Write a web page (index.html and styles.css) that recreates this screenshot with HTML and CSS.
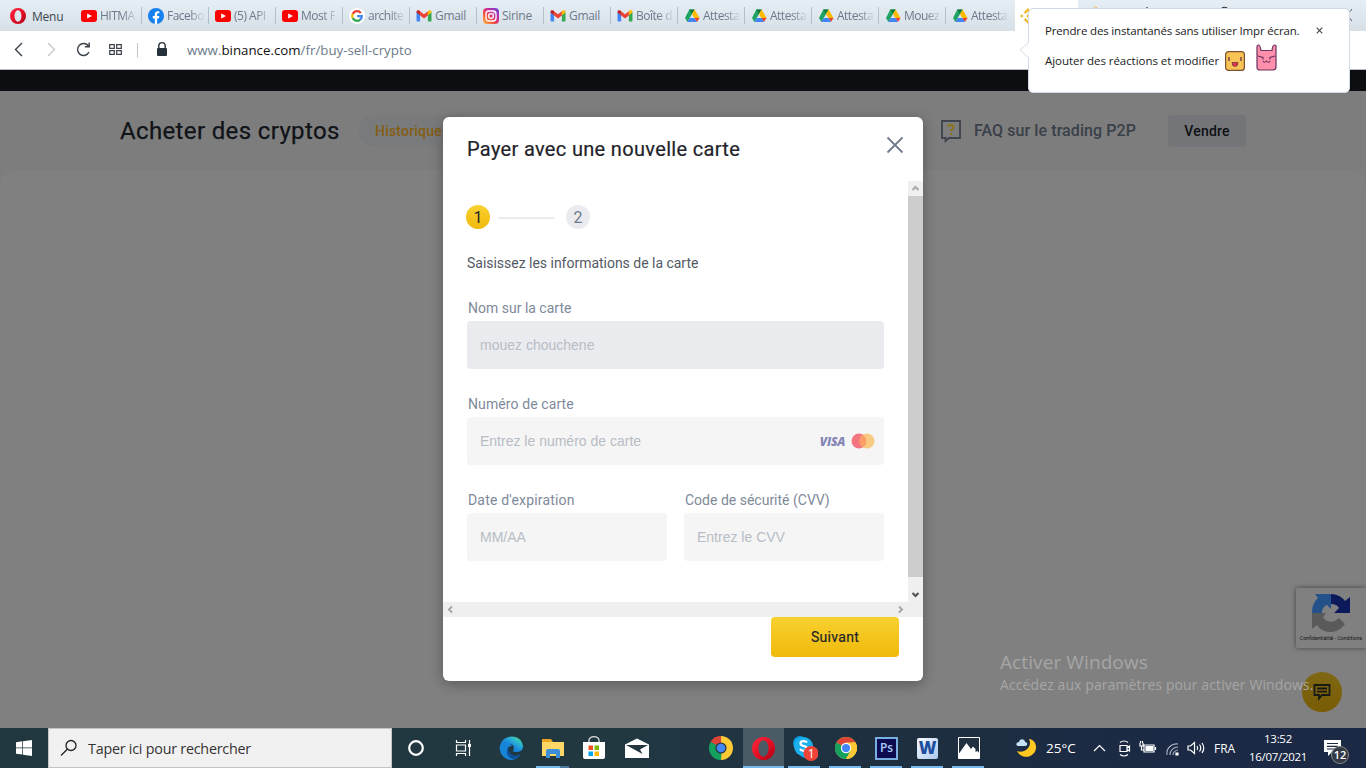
FILE: index.html
```html
<!DOCTYPE html>
<html lang="fr">
<head>
<meta charset="utf-8">
<title>Acheter des cryptos</title>
<link rel="stylesheet" href="styles.css">
</head>
<body>
<svg class="defs" width="0" height="0" aria-hidden="true">
  <symbol id="youtube" viewBox="0 0 16 16"><rect y="2" width="16" height="12" rx="3" fill="#f00"/><path d="M6.2 5.4v5.2L11 8z" fill="#fff"/></symbol>
  <symbol id="gmail" viewBox="0 0 16 16"><path d="M.5 4v8.3c0 .8.5 1.2 1.2 1.2h2.4V6.7z" fill="#4285f4"/><path d="M15.5 4v8.3c0 .8-.5 1.2-1.2 1.2h-2.4V6.7z" fill="#34a853"/><path d="M.5 4.6V4c0-1.7 1.5-2.3 2.8-1.4L4.1 3.200v4.100z" fill="#c5221f"/><path d="M4.100 3.200 8 6.200l3.900-3v4.200L8 10.400 4.100 7.400z" fill="#ea4335"/><path d="M15.500 4.600V4c0-1.700-1.500-2.300-2.800-1.400l-.8.6v4.100z" fill="#fbbc04"/></symbol>
  <symbol id="drive" viewBox="0 0 16 16"><path d="M5.300 1.500h5.300L8 6 3.400 14 1 10z" fill="#1ea362"/><path d="M5.300 1.500 8 6l2.600-4.500z" fill="#11783c"/><path d="M10.600 1.500 15.500 10h-5.200L8 6z" fill="#ffba00"/><path d="M10.300 10h5.200L13 14z" fill="#ea4335"/><path d="M5.700 10h4.600L13 14H3.400z" fill="#4285f4"/></symbol>
  <symbol id="chrome" viewBox="0 0 24 24"><circle cx="12" cy="12" r="12" fill="#fbc934"/><path d="M12 12 1.600 6A12 12 0 0 1 22.400 6H12z" fill="#db4437"/><path d="M1.600 6A12 12 0 0 0 12 24l5-9-5-3z" fill="#16a05d"/><path d="M22.400 6A12 12 0 0 1 12 24l5.200-9L17 6z" fill="#fbc934"/><circle cx="12" cy="12" r="5.600" fill="#fff"/><circle cx="12" cy="12" r="4.500" fill="#4285f4"/></symbol>
  <symbol id="chromeDark" viewBox="0 0 24 24"><path d="M12 12 1.600 6A12 12 0 0 1 12 0z" fill="#db4437"/><path d="M12 0a12 12 0 0 1 0 24V12z" fill="#fbc934"/><path d="M1.600 6A12 12 0 0 0 12 24l1-12z" fill="#16a05d"/><path d="M1.600 6A12 12 0 0 1 12 0v8z" fill="#db4437"/><circle cx="12" cy="12" r="5.600" fill="#2b3a40"/><circle cx="12" cy="12" r="4.300" fill="#4285f4"/></symbol>
  <symbol id="opera" viewBox="0 0 24 24"><path fill-rule="evenodd" d="M12 0a12 12 0 1 0 0 24 12 12 0 0 0 0-24zm0 3.500c3 0 5.200 3.800 5.200 8.500s-2.200 8.500-5.200 8.500S6.800 16.700 6.800 12 9 3.500 12 3.500z" fill="url(#operaRed)"/></symbol>
  <linearGradient id="operaRed" x1="0" y1="0" x2="1" y2="1"><stop offset="0" stop-color="#ff2a40"/><stop offset=".55" stop-color="#e20d22"/><stop offset="1" stop-color="#a70014"/></linearGradient>
  <linearGradient id="insta" x1="0" y1="1" x2="1" y2="0"><stop offset="0" stop-color="#fdc247"/><stop offset=".35" stop-color="#f5533d"/><stop offset=".65" stop-color="#c32aa3"/><stop offset="1" stop-color="#5b4fd8"/></linearGradient>
  <linearGradient id="edgeBlue" x1="0" y1="1" x2="1" y2="0"><stop offset="0" stop-color="#0b5cad"/><stop offset=".5" stop-color="#1b8ee0"/><stop offset=".75" stop-color="#31bfc9"/><stop offset="1" stop-color="#66db50"/></linearGradient>
</svg>

<header class="tabbar">
  <div class="menu"><svg width="16" height="16"><use href="#opera"/></svg><span>Menu</span></div>
  <nav class="tabs">
    <div class="tab"><svg><use href="#youtube"/></svg><span>HITMA</span></div>
    <div class="tab"><svg viewBox="0 0 16 16"><circle cx="8" cy="8" r="8" fill="#1580ee"/><path d="M6.800 16v-5.500h-2V8.100h2V6.400c0-2.100 1.200-3.200 3-3.200.8 0 1.500.1 1.500.1v1.900h-1c-1 0-1.200.6-1.200 1.300v1.600h2.200l-.4 2.400H9.100V16z" fill="#fff"/></svg><span>Facebo</span></div>
    <div class="tab"><svg><use href="#youtube"/></svg><span>(5) API</span></div>
    <div class="tab"><svg><use href="#youtube"/></svg><span>Most F</span></div>
    <div class="tab"><svg viewBox="0 0 16 16"><circle cx="8" cy="8" r="8" fill="#fff"/><g fill="none" stroke-width="2.300"><path d="M11.800 5A4.800 4.800 0 0 0 3.700 5.900" stroke="#ea4335"/><path d="M3.700 5.900a4.800 4.800 0 0 0 0 4.200" stroke="#fbbc05"/><path d="M3.700 10.100a4.800 4.800 0 0 0 7.500 1.500" stroke="#34a853"/><path d="M11.200 11.600A4.800 4.800 0 0 0 12.800 8.200H8.200" stroke="#4285f4"/></g></svg><span>archite</span></div>
    <div class="tab"><svg><use href="#gmail"/></svg><span class="full">Gmail</span></div>
    <div class="tab"><svg viewBox="0 0 16 16"><rect width="16" height="16" rx="4" fill="url(#insta)"/><rect x="3" y="3" width="10" height="10" rx="3" fill="none" stroke="#fff" stroke-width="1.300"/><circle cx="8" cy="8" r="2.400" fill="none" stroke="#fff" stroke-width="1.300"/><circle cx="11" cy="5" r=".7" fill="#fff"/></svg><span class="full">Sirine</span></div>
    <div class="tab"><svg><use href="#gmail"/></svg><span class="full">Gmail</span></div>
    <div class="tab"><svg><use href="#gmail"/></svg><span>Boîte d</span></div>
    <div class="tab"><svg><use href="#drive"/></svg><span>Attesta</span></div>
    <div class="tab"><svg><use href="#drive"/></svg><span>Attesta</span></div>
    <div class="tab"><svg><use href="#drive"/></svg><span>Attesta</span></div>
    <div class="tab"><svg><use href="#drive"/></svg><span>Mouez</span></div>
    <div class="tab last"><svg><use href="#drive"/></svg><span>Attesta</span></div>
    <div class="tab active"><svg viewBox="0 0 16 16" fill="#f3ba2f"><path d="M8 0 3.800 4.200l1.800 1.700L8 3.500l2.400 2.400 1.800-1.700zM0 8l1.700-1.700L3.500 8 1.700 9.700zM8 16l-4.200-4.200 1.800-1.700L8 12.500l2.400-2.400 1.800 1.700zM16 8l-1.700-1.700L12.500 8l1.800 1.700zM8 6.200 6.200 8 8 9.800 9.800 8z"/></svg></div>
  </nav>
  <svg class="window-ctl" width="288" height="31" viewBox="0 0 288 31"><path d="m16 8 1.500-1.500L19 8" fill="none" stroke="#f3ba2f"/><path d="m68.500 8 .5-1 .5 1M274 9l-5 6 5 6" fill="none" stroke="#555f6b"/><path d="M144 8c1-1 4-1 5 0" fill="none" stroke="#333" stroke-width="1.200"/></svg>
</header>

<div class="address">
  <svg width="180" height="38" viewBox="0 0 180 38" fill="none" stroke="#3b4148" stroke-width="1.400">
    <path d="m22 12-6.500 6.500L22 25"/>
    <path d="m48 12 6.500 6.500L48 25" stroke="#c3c7cb"/>
    <path d="M88.500 15A6 6 0 1 0 89 21M89.200 11.500v4.300h-4.300"/>
    <path d="M109.700 13.700h4.600v3.600h-4.600zM116.700 13.700h4.600v3.600h-4.600zM109.700 19.700h4.600v3.600h-4.600zM116.700 19.700h4.600v3.600h-4.600z" stroke-width="1.200"/>
    <path d="M137.500 12v14.500" stroke="#c0c6cc" stroke-width="1"/>
    <path d="M158.800 17v-2.200a3.200 3.200 0 0 1 6.400 0V17" stroke="#26313b"/><rect x="157" y="17" width="10" height="8" rx="1" fill="#26313b" stroke="none"/>
  </svg>
  <p class="url">www.<b>binance.com</b>/fr/buy-sell-crypto</p>
  <svg class="dots" width="18" height="12" viewBox="0 0 18 12"><path d="M0 1h2M0 5.500h2M0 10h2" stroke="#777"/></svg>
</div>

<main class="page">
  <div class="strip"></div>
  <div class="subhead">
    <h1>Acheter des cryptos</h1>
    <span class="history">Historique</span>
    <a class="faq"><svg width="22" height="24" viewBox="0 0 22 24"><path d="M2 2h18v17H9l-3.500 3V19H2z" fill="none" stroke="#3e444d" stroke-width="1.800"/><path d="M8.300 8c.2-3 5.500-2.800 5.200.2-.2 2-2.500 2-2.500 4" fill="none" stroke="#8a7213" stroke-width="1.800"/><circle cx="11" cy="15" r="1.100" fill="#8a7213"/></svg><span>FAQ sur le trading P2P</span></a>
    <span class="sell">Vendre</span>
  </div>
  <div class="sheet"></div>

  <aside class="captcha">
    <svg width="38" height="38" viewBox="0 0 38 38"><path d="M19 0v15l-4-4c-3 1-5 4-5 8H0C0 12 2 8 6 4L3 0z" fill="#25518b"/><path d="M19 0c6 0 11 3 14 7l5-4v16H22l5-5c-2-3-4-4-8-4z" fill="#0c1a5c"/><path d="M0 19h14l-3 4c3 6 11 6 16 1l6 6C24 42 10 39 5 31l-5 4z" fill="#5a5a5a"/></svg>
    <p>Confidentialité - Conditions</p>
  </aside>
  <div class="chat"><svg width="18" height="18" viewBox="0 0 18 18" fill="none" stroke="#191a16" stroke-width="1.800"><path d="M1.500 2h15v10H9l-3 3.500V12H1.500zM4 5.500h10M4 8.700h10"/></svg></div>
  <div class="watermark"><p>Activer Windows</p><p>Accédez aux paramètres pour activer Windows.</p></div>

  <section class="modal">
    <div class="modal-head">
      <h2>Payer avec une nouvelle carte</h2>
      <svg width="18" height="18" viewBox="0 0 18 18"><path d="m1.500 1.500 15 15m0-15-15 15" stroke="#707a8a" stroke-width="1.800"/></svg>
    </div>
    <div class="scroller">
      <div class="form">
        <div class="steps"><span class="step on">1</span><i></i><span class="step">2</span></div>
        <p class="intro">Saisissez les informations de la carte</p>
        <label><span class="l-name">Nom sur la carte</span><div class="field filled">mouez chouchene</div></label>
        <label><span class="l-num">Numéro de carte</span>
          <div class="field">Entrez le numéro de carte
            <span class="brands"><em>VISA</em><svg width="24" height="16" viewBox="0 0 24 16"><circle cx="8" cy="8" r="7.500" fill="#f37580"/><circle cx="16" cy="8" r="7.500" fill="#f9ca81"/><path d="M12 1.700a7.500 7.500 0 0 1 0 12.600 7.500 7.500 0 0 1 0-12.600z" fill="#fb9d68"/></svg></span>
          </div></label>
        <div class="pair">
          <label><span class="l-date">Date d'expiration</span><div class="field">MM/AA</div></label>
          <label><span class="l-cvv">Code de sécurité (CVV)</span><div class="field">Entrez le CVV</div></label>
        </div>
      </div>
      <div class="vbar"><svg width="15" height="15" viewBox="0 0 15 15"><path d="m4.500 9 3-3 3 3" fill="none" stroke="#a8a8a8" stroke-width="2"/></svg><b></b><svg width="15" height="25" viewBox="0 0 15 25"><path d="m4.500 16 3 3 3-3" fill="none" stroke="#505050" stroke-width="2"/></svg></div>
    </div>
    <div class="hbar"><svg width="480" height="15" viewBox="0 0 480 15"><path d="m9 4.500-3 3 3 3M456 4.500l3 3-3 3" fill="none" stroke="#a8a8a8" stroke-width="2"/></svg></div>
    <div class="modal-foot"><button>Suivant</button></div>
  </section>
</main>

<footer class="taskbar">
  <div class="start"><svg width="16" height="16" viewBox="0 0 16 16" fill="#fff"><path d="M0 2.200 6.300 1.300v6.300H0zM7 1.200 16 0v7.600H7zM0 8.300h6.300v6.300L0 13.800zM7 8.300h9V16l-9-1.300z"/></svg></div>
  <div class="search"><svg width="18" height="18" viewBox="0 0 18 18" fill="none" stroke="#222" stroke-width="1.300"><circle cx="11" cy="6.500" r="5"/><path d="m7.300 10.200-6.300 6.300"/></svg><span>Taper ici pour rechercher</span></div>
  <div class="apps">
    <div class="app"><svg width="18" height="18" viewBox="0 0 18 18"><circle cx="9" cy="9" r="6.800" fill="none" stroke="#fff" stroke-width="2.200"/></svg></div>
    <div class="app view"><svg width="18" height="16" viewBox="0 0 18 16" fill="none" stroke="#fff" stroke-width="1.200"><path d="M1.500 0v2.500h9V0M1.500 16v-2.500h9V16M1.500 5h9v6h-9zM14.500 0v16"/><path d="M13 4h3v3h-3z" fill="#fff" stroke="none"/></svg></div>
    <div class="app edge"><svg width="24" height="24" viewBox="0 0 24 24"><path d="M1 10C3-2 22-3 24 10c0 5-4 6.500-8 6-2-.3-2.500-1-1.500-2.500C16 9 12 7 8 8.500c-3 1-5 4-4 8C1 15 0 13 1 10z" fill="url(#edgeBlue)"/><path d="M1 10c4-5 10-4 12 0-3 0-5 2-4 6 1 4 7 6 13 2-3 5-8 7-13 5.500C3 21 0 16 1 10z" fill="#1784d6"/><path d="M9 12c-3 5 0 10 5 11 3 0 6-2 8-5-5 3-11 1-12-3z" fill="#104f98"/></svg></div>
    <div class="app folder open"><svg width="22" height="20" viewBox="0 0 22 20"><path d="M0 1h9l2 3h11v14H0z" fill="#e9a723"/><path d="M0 4h22v14H0z" fill="#ffd767"/><path d="M4 20v-7q0-2 2-2h10q2 0 2 2v7h-4v-4H8v4z" fill="#3c8fd6"/></svg></div>
    <div class="app store"><svg width="24" height="24" viewBox="0 0 24 24"><path d="M1 6h22v15q0 2-2 2H3q-2 0-2-2z" fill="#fff"/><path d="M7 6V4q1-3.300 5-3.300T17 4v2" fill="none" stroke="#ddd" stroke-width="1.300"/><path d="M6.500 9.500H11V14H6.500z" fill="#f25022"/><path d="M12.500 9.500H17V14h-4.500z" fill="#7fba00"/><path d="M6.500 15.500H11V20H6.500z" fill="#00a4ef"/><path d="M12.500 15.500H17V20h-4.500z" fill="#ffb900"/></svg></div>
    <div class="app mail"><svg width="24" height="20" viewBox="0 0 24 20"><path d="M0 6.500 12 .5l12 6V20H0z" fill="#fff"/><path d="M1 7h22l-8 4.500 2.500 4.500z" fill="#21363f"/></svg></div>
    <div class="app chr"><svg width="24" height="24"><use href="#chromeDark"/></svg></div>
    <div class="app run current"><svg width="23" height="23"><use href="#opera"/></svg></div>
    <div class="app run"><svg width="26" height="26" viewBox="0 0 26 26"><circle cx="8" cy="8" r="7" fill="#0a9de0"/><circle cx="14" cy="15" r="8" fill="#0a9de0"/><circle cx="11.500" cy="11.500" r="9.500" fill="#1cb0ec"/><path d="M15 7.500c-1.500-2-6.500-2-6.500 1 0 3.500 6.500 1.500 6.500 5 0 3-5.500 3-7 .5" fill="none" stroke="#fff" stroke-width="2.200"/><circle cx="19" cy="18.500" r="7.500" fill="#f04438"/><text x="15.800" y="22.800" class="one">1</text></svg></div>
    <div class="app run"><svg width="22" height="22" viewBox="0 0 24 24"><use href="#chrome"/></svg></div>
    <div class="app run"><div class="ps">Ps</div></div>
    <div class="app run"><div class="word">W</div></div>
    <div class="app run"><svg width="22" height="22" viewBox="0 0 22 22"><path d="M.5.500h21v21H.5z" fill="#21303f" stroke="#fff"/><path d="M1 16.500 8.500 6l4.500 6 2-2.500 2.500 2.500v3l2-1 2 2.500v5H1z" fill="#fff"/></svg></div>
  </div>
  <div class="weather"><svg width="22" height="20" viewBox="0 0 22 20"><path d="M13 1c8 1 9 11 4 15-5 5-13 3-16-3 3 1 6 1 9-1 4-3 5-7 3-11z" fill="#ffc922"/><path d="M3 8c-4 0-3-4 0-4 1-4 6-3 6 0 3 0 3 4 0 4z" fill="#c7e3f8"/></svg><span>25°C</span></div>
  <svg class="tray" width="116" height="20" viewBox="0 0 116 20" fill="none" stroke="#fff" stroke-width="1.200">
    <path d="m3 13 5.500-5.500L14 13"/>
    <path d="M29 7.500h7v6h-7zM36 9.500l2.500-1.500v5L36 11.500M29 4.500q4-3 8 0M29 16.500q4 3 8 0"/>
    <path d="M53 7h10v7H53zM64.500 9v3M49 5v3h3V5M50.500 8v4h3M49.500 3v2M51.500 3v2"/><path d="M55 8.500h6.500v4H55z" fill="#fff"/>
    <path d="M76 17C75 10 81 5 87 6M79 17c0-5 4-8 8-8M82 17c0-3 3-5 5-5" stroke="#aab3bf"/><path d="M85 17v-2h2v2z" fill="#fff"/>
    <path d="M97 8h2.500l4-3.500v11L99.500 12H97zM106 8q1.500 2 0 4M108.500 6.500q2.500 3.500 0 7M111 5q3.500 5 0 10"/>
  </svg>
  <span class="lang">FRA</span>
  <div class="clock"><span>13:52</span><span>16/07/2021</span></div>
  <div class="notif"><svg width="17" height="16" viewBox="0 0 17 16"><path d="M0 0h17v12H8l-4 4v-4H0z" fill="#fff"/><path d="M3 3.500h11M3 6.300h11M3 9h8" stroke="#1c2a45" stroke-width="1.200"/></svg><b>12</b></div>
</footer>

<div class="tooltip">
  <svg class="arrow" width="10" height="16" viewBox="0 0 10 16"><path d="M10 0 1 8l9 8" fill="#fff" stroke="#d5dde6"/></svg>
  <p class="tip1">Prendre des instantanés sans utiliser Impr écran.</p>
  <svg class="close" width="7" height="7" viewBox="0 0 7 7"><path d="m.7.700 5.600 5.600m0-5.600L.7 6.300" stroke="#444" stroke-width="1.100"/></svg>
  <div class="tip2"><p>Ajouter des réactions et modifier</p>
    <svg width="20" height="20" viewBox="0 0 20 20"><rect x=".6" y=".6" width="18.800" height="18.800" rx="3" fill="#f9c356" stroke="#7a5230" stroke-width="1.200"/><path d="M4 6v4M16 6v4" stroke="#5c3540" stroke-width="1.300"/><path d="M7 11.500h6q0 4-3 4t-3-4z" fill="#e0344c" stroke="#5c3540" stroke-width=".7"/></svg>
    <svg class="devil" width="21" height="27" viewBox="0 0 21 27"><path d="M1 3q0-2 1.500-2T5 6.500h11Q16.500 1 18.500 1T20 3v20q0 3-3 3H4q-3 0-3-3z" fill="#ff8fab" stroke="#6b3360" stroke-width="1.200"/><path d="m2 12 5 1.500v2M19 12l-5 1.500v2M7 17q1.500 2.500 3.500 0 2 2.500 3.500 0" fill="none" stroke="#6b3360" stroke-width="1.200"/></svg>
  </div>
</div>
</body>
</html>
```

FILE: styles.css
```css
* { box-sizing: border-box; }
body { margin: 0; width: 1366px; height: 768px; overflow: hidden; display: flex; flex-direction: column; position: relative; font-family: "Open Sans", "Noto Sans", sans-serif; }
p, h1, h2 { margin: 0; font-weight: 400; white-space: nowrap; }
svg { display: block; flex: none; }
.defs { position: absolute; }

.tabbar { height: 31px; flex: none; display: flex; background: linear-gradient(#e5edf5, #d7dfe7); font-size: 12px; color: #6c7b8a; }
.menu { width: 75px; padding: 1px 0 0 10px; display: flex; align-items: center; gap: 6px; color: #3b4650; letter-spacing: -.25px; }
.tabs { display: flex; }
.tab { width: 67px; height: 31px; padding-left: 6px; display: flex; align-items: center; gap: 3px; position: relative; letter-spacing: -.5px; }
.tab svg { width: 16px; height: 16px; }
.tab span { white-space: nowrap; -webkit-mask-image: linear-gradient(90deg, #000 22px, rgba(0, 0, 0, .15) 36px); mask-image: linear-gradient(90deg, #000 22px, rgba(0, 0, 0, .15) 36px); }
.tab .full { -webkit-mask-image: none; mask-image: none; letter-spacing: -.3px; }
.tab::after { content: ""; position: absolute; right: 0; top: 7px; width: 1px; height: 17px; background: #b3bfcb; }
.tab.last::after, .tab.active::after { display: none; }
.tab.last { width: 69px; }
.tab.active { width: 63px; padding-left: 5px; background: #fff; }
.window-ctl { width: 288px; }

.address { height: 39px; flex: none; display: flex; align-items: center; background: #fff; border-bottom: 1px solid #b9bec4; }
.url { margin-left: 7px; font-size: 13.300px; color: #6c7b8a; }
.url b { font-weight: 400; color: #111; }
.dots { margin-left: auto; }

.page { flex: 1; position: relative; display: flex; flex-direction: column; background: #7d7d7d; font-family: Roboto, sans-serif; }
.strip { height: 21px; background: #0c0e12; }
.subhead { height: 79px; padding: 0 120px; display: flex; align-items: center; }
.subhead h1 { width: 219px; font-size: 24px; color: #101317; letter-spacing: .36px; -webkit-text-stroke: .25px #101317; }
.history { margin-left: 20px; padding-left: 16px; width: 110px; height: 32px; line-height: 32px; border-radius: 16px; background: #787a7c; color: #855e12; font-size: 14px; font-weight: 500; letter-spacing: .2px; }
.faq { margin-left: auto; display: flex; align-items: center; gap: 12px; font-size: 16px; font-weight: 500; color: #3a4049; letter-spacing: .08px; }
.sell { margin-left: 32px; width: 78px; height: 32px; line-height: 32px; border-radius: 4px; background: #737578; text-align: center; font-size: 14px; font-weight: 500; color: #0e1014; letter-spacing: .2px; }
.sheet { flex: 1; background: #808080; border-radius: 16px 16px 0 0; }

.captcha { position: absolute; right: 0; top: 518px; width: 70px; height: 60px; padding: 6px 0 0; display: flex; flex-direction: column; align-items: center; gap: 3px; background: #808080; border-radius: 2px 0 0 2px; box-shadow: 0 0 5px #404040; }
.captcha p { font-size: 5px; line-height: 6px; color: #111; letter-spacing: .08px; }
.chat { position: absolute; left: 1302px; top: 602px; width: 40px; height: 40px; border-radius: 50%; display: grid; place-items: center; background: linear-gradient(#7f6714, #795c04); }
.watermark { position: absolute; left: 1000px; top: 580px; color: #a6a6a6; font-family: "Open Sans", sans-serif; font-size: 14px; line-height: 20px; letter-spacing: .1px; }
.watermark p:first-child { font-size: 19px; line-height: 25px; }

.modal { position: absolute; left: 443px; top: 47px; width: 480px; height: 564px; display: flex; flex-direction: column; background: #fff; border-radius: 6px; overflow: hidden; color: #1e2329; }
.page::after { content: ""; position: absolute; left: 443px; top: 47px; width: 480px; height: 564px; border-radius: 6px; box-shadow: 0 3px 14px rgba(0, 0, 0, .3); pointer-events: none; }
.modal-head { height: 64px; padding: 0 19px 0 24px; display: flex; align-items: center; justify-content: space-between; }
.modal-head h2 { font-size: 20px; letter-spacing: .33px; -webkit-text-stroke: .2px #1e2329; }
.modal-head svg { margin-bottom: 8px; }
.scroller { height: 421px; display: flex; }
.form { width: 465px; padding: 24px 24px 0; }
.steps { display: flex; align-items: center; margin-left: -1px; }
.steps i { width: 56px; height: 2px; margin: 1px 12px 0 8px; background: #eaecef; }
.step { width: 24px; height: 24px; line-height: 25px; border-radius: 50%; text-align: center; font-size: 16px; background: #eaebef; color: #707a8a; }
.step.on { background: linear-gradient(#f8d12f, #f0b90b); color: #1e2329; }
.intro { margin-top: 24px; font-size: 14px; line-height: 20px; color: #535964; letter-spacing: -.02px; }
label { display: block; margin-top: 25px; font-size: 14px; color: #808a9a; }
label > span { display: block; height: 20px; margin: 0 0 3px 1px; line-height: 20px; white-space: nowrap; }
.l-num { letter-spacing: .1px; }
.l-date { letter-spacing: .18px; }
.field { height: 48px; padding: 0 9px 0 13px; border-radius: 4px; background: #f5f5f5; display: flex; align-items: center; font: 14px "Liberation Sans", sans-serif; color: #b7bdc6; }
.filled { background: #eaebef; }
.brands { margin-left: auto; display: flex; align-items: center; gap: 6px; }
.brands em { font: italic 800 12px "Open Sans", sans-serif; letter-spacing: -.3px; color: #8585b5; }
.pair { display: grid; grid-template-columns: 200px 200px; gap: 17px; }
.vbar { width: 15px; background: #f0f0f0; }
.vbar b { display: block; height: 381px; background: #cdcdcd; }
.hbar { height: 15px; background: #efefef; }
.modal-foot { display: flex; justify-content: flex-end; padding-right: 24px; }
.modal-foot button { width: 128px; height: 40px; padding: 0; border: 0; border-radius: 4px; background: linear-gradient(#f8d12f, #f0b90b); font: 400 14px Roboto, sans-serif; letter-spacing: .3px; -webkit-text-stroke: .2px #1e2329; color: #1e2329; }

.taskbar { height: 40px; flex: none; display: flex; align-items: center; background: linear-gradient(90deg, #21373f, #213841 45%, #1e2f40 66%, #1b2944 85%, #1c2945); color: #fff; font-size: 12px; }
.start { width: 48px; display: grid; place-items: center; }
.search { width: 344px; height: 40px; padding-left: 11px; display: flex; align-items: center; gap: 10px; background: #f1f1f1; border: 1px solid #c4c4c4; color: #333; font-size: 14.300px; letter-spacing: -.22px; }
.apps { display: flex; height: 40px; margin-left: 3px; }
.app { width: 41px; height: 40px; display: grid; place-items: center; position: relative; }
.view { margin-left: 7px; }
.edge { margin-left: 6px; }
.folder { margin-left: 1px; }
.mail { margin-left: 2px; }
.chr { margin-left: 43px; }
.app.run::after { content: ""; position: absolute; left: 4px; bottom: 0; width: 32px; height: 2px; background: #76b9ed; }
.app.open::after { content: ""; position: absolute; left: 4px; bottom: 0; width: 33px; height: 2px; background: linear-gradient(90deg, #76b9ed 24px, #4c7ba1 24px); }
.app.run.current { margin-left: 2px; background: #4a5b65; }
.app.run.current::after { left: 0; width: 41px; }
.one { font: 12px "Open Sans", sans-serif; fill: #fff; }
.ps { width: 23px; height: 23px; border: 2px solid #79aee0; background: #0c0a50; color: #a7cff7; font-size: 12px; font-weight: 600; line-height: 18px; text-align: center; }
.word { width: 21px; height: 21px; border-radius: 2px; background: linear-gradient(135deg, #f8fbff, #aac7ec); color: #1e4f9e; font-size: 17px; font-weight: 800; line-height: 20px; text-align: center; }
.weather { margin-left: 27px; display: flex; align-items: center; gap: 8px; width: 75px; font-size: 13.500px; white-space: nowrap; }
.lang { margin-left: 7px; width: 30px; font-size: 12px; }
.clock { width: 76px; margin-left: -4px; display: flex; flex-direction: column; align-items: center; line-height: 18px; font-size: 11.500px; letter-spacing: -.3px; }
.notif { margin-left: 8px; position: relative; }
.notif b { position: absolute; left: 7px; top: 6px; width: 18px; height: 18px; border: 1px solid #888; border-radius: 50%; background: #333a45; font-size: 11px; font-weight: 600; line-height: 15px; text-align: center; }

.tooltip { position: absolute; left: 1028px; top: 8px; width: 322px; height: 85px; padding: 13px 16px 0; background: #fff; border: 1px solid #d0dae4; border-radius: 5px; color: #1b1b1b; font-size: 11.500px; line-height: 18px; }
.tip1 { letter-spacing: -.16px; }
.tip2 p { letter-spacing: -.05px; }
.tip2 { display: flex; align-items: center; margin-top: 11px; height: 20px; gap: 6px; }
.tip2 .devil { margin: -8px 0 0 5px; }
.arrow { position: absolute; left: -10px; top: 33px; }
.close { position: absolute; left: 287px; top: 18px; }
```
